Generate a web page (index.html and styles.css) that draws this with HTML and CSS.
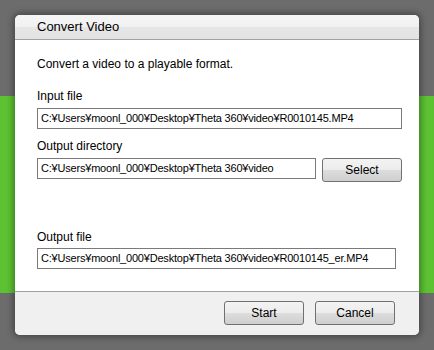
FILE: index.html
```html
<!DOCTYPE html>
<html lang="en">
<head>
    <meta charset="UTF-8">
    <title>Convert Video</title>
    <link rel="stylesheet" href="styles.css">
</head>
<body>
    <div class="dialog">
        <div class="dialog-title">Convert Video</div>
        <div class="dialog-body">
            <p class="intro">Convert a video to a playable format.</p>

            <label class="field-label">Input file</label>
            <div class="textbox wide">C:¥Users¥moonl_000¥Desktop¥Theta 360¥video¥R0010145.MP4</div>

            <label class="field-label">Output directory</label>
            <div class="row">
                <div class="textbox dir">C:¥Users¥moonl_000¥Desktop¥Theta 360¥video</div>
                <button class="button select">Select</button>
            </div>

            <label class="field-label spaced">Output file</label>
            <div class="textbox out">C:¥Users¥moonl_000¥Desktop¥Theta 360¥video¥R0010145_er.MP4</div>
        </div>
        <div class="dialog-footer">
            <button class="button">Start</button>
            <button class="button">Cancel</button>
        </div>
    </div>
</body>
</html>
```

FILE: styles.css
```css
body {
    margin: 0;
    padding: 15px;
    height: 350px;
    box-sizing: border-box;
    background: linear-gradient(#6c6c6c 0, #6c6c6c 96px, #5cc232 96px, #5cc232 293px, #6c6c6c 293px);
    font-family: "Liberation Sans", Arial, sans-serif;
    font-size: 12px;
    line-height: 14px;
    color: #000;
    overflow: hidden;
}
.dialog {
    width: 404px;
    height: 320px;
    background-color: #fff;
    border-radius: 5px;
    box-shadow: 0 0 6px 2px rgba(0, 0, 0, 0.35);
    display: flex;
    flex-direction: column;
    overflow: hidden;
}
.dialog-title {
    height: 24px;
    padding-left: 22px;
    font-size: 13px;
    line-height: 24px;
    background: linear-gradient(#f5f5f5 0, #f1f1f1 12px, #e6e6e6 12px, #e3e3e3 100%);
    border-bottom: 1px solid #a3a3a3;
}
.dialog-body {
    flex: 1;
    padding: 17px 17px 0 22px;
    display: flex;
    flex-direction: column;
    align-items: flex-start;
}
.intro {
    margin: 0 0 18px 0;
}
.field-label {
    display: block;
    margin-bottom: 5px;
}
.field-label.spaced {
    margin-top: 48px;
    margin-bottom: 4px;
}
.textbox {
    height: 19px;
    line-height: 19px;
    padding: 0 3px;
    border: 1px solid #7a7a7a;
    background-color: #fff;
    font-size: 11px;
    letter-spacing: -0.2px;
    white-space: nowrap;
    overflow: hidden;
    box-sizing: content-box;
}
.textbox.wide {
    width: 357px;
    margin-bottom: 10px;
}
.textbox.out {
    width: 351px;
}
.row {
    display: flex;
    align-items: flex-start;
    gap: 6px;
}
.textbox.dir {
    width: 271px;
}
.button {
    width: 80px;
    height: 24px;
    padding: 0;
    border: 1px solid #707070;
    border-radius: 3px;
    background: linear-gradient(#f3f3f3 0, #ececec 50%, #dddddd 50%, #cfcfcf 100%);
    font-family: "Liberation Sans", Arial, sans-serif;
    font-size: 12px;
    color: #000;
    cursor: pointer;
}
.dialog-footer {
    height: 44px;
    border-top: 1px solid #a0a0a0;
    background-color: #f0f0f0;
    display: flex;
    justify-content: flex-end;
    align-items: flex-start;
    gap: 11px;
    padding: 9px 24px 0 0;
    box-sizing: border-box;
}
```
